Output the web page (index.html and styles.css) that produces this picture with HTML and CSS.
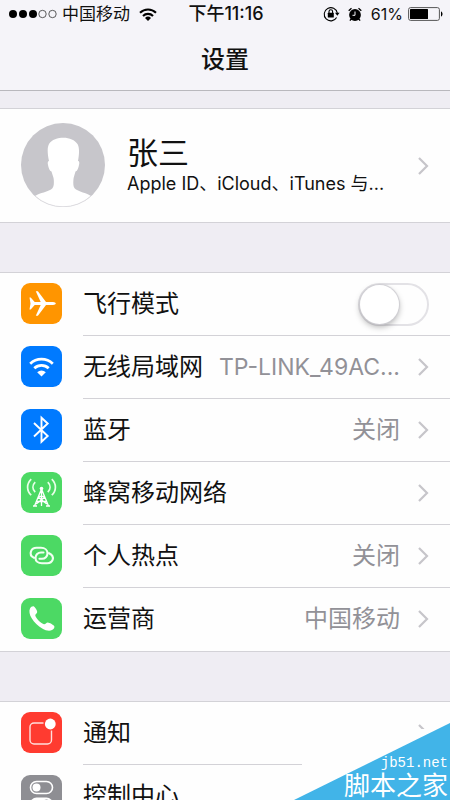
FILE: index.html
```html
<!DOCTYPE html>
<html lang="zh-CN">
<head>
<meta charset="utf-8">
<meta name="viewport" content="width=device-width, initial-scale=1">
<title>设置</title>
<link rel="stylesheet" href="styles.css">
</head>
<body>
<svg class="defs" aria-hidden="true">
  <symbol id="chevron" viewBox="0 0 12 20"><path d="M2 2l8 8-8 8" fill="none" stroke="#c6c5ca" stroke-width="2.2"/></symbol>
</svg>
<div class="screen">
  <header class="header">
    <div class="status">
      <div class="status-left">
        <svg width="48" height="10" viewBox="0 0 48 10" aria-hidden="true">
          <g fill="#000"><circle cx="4" cy="5" r="4"/><circle cx="14" cy="5" r="4"/><circle cx="24" cy="5" r="4"/></g>
          <g fill="none" stroke="#333" stroke-width=".8"><circle cx="33.500" cy="5" r="3.700"/><circle cx="43.500" cy="5" r="3.700"/></g>
        </svg>
        <span>中国移动</span>
        <svg class="status-wifi" width="18" height="13" viewBox="0 0 18 13" aria-hidden="true">
          <g fill="none" stroke="#000" stroke-width="2.100"><path d="M1 4.700a11.500 11.500 0 0 1 16 0"/><path d="M4 8a7 7 0 0 1 10 0"/></g>
          <path d="M6 10a4.300 4.300 0 0 1 6 0l-3 3z"/>
        </svg>
      </div>
      <time class="clock">下午11:16</time>
      <div class="status-right">
        <svg width="17" height="16" viewBox="0 0 17 16" aria-hidden="true">
          <path d="M13.600 11.500A6.600 6.600 0 1 1 14.300 7" fill="none" stroke="#000" stroke-width="1.100"/>
          <path d="M12 6.800h4.600l-2.300 3z"/>
          <rect x="4.800" y="6.800" width="6" height="4.600" rx=".5"/>
          <path d="M6 7V5.500a1.800 1.800 0 0 1 3.600 0V7" fill="none" stroke="#000" stroke-width="1.100"/>
        </svg>
        <svg class="status-alarm" width="14" height="15" viewBox="0 0 14 15" aria-hidden="true">
          <circle cx="7" cy="8" r="5.900"/>
          <path d="M.7 3.800L3.500 1.300M13.300 3.800L10.500 1.300M3.200 12L1.900 13.700M10.800 12l1.300 1.700" stroke="#000" stroke-width="1.300"/>
          <path d="M7 4.500V8.300H4.500" fill="none" stroke="#f5f4f9" stroke-width="1"/>
        </svg>
        <span class="battery-text">61%</span>
        <svg width="35" height="14" viewBox="0 0 35 14" aria-hidden="true">
          <rect x=".6" y=".6" width="30.800" height="12.800" rx="2" fill="none" stroke="#555" stroke-width="1"/>
          <rect x="2" y="2" width="18" height="10" rx=".6"/>
          <path d="M33 4.500c2 .6 2 4.400 0 5z"/>
        </svg>
      </div>
    </div>
    <h1 class="title">设置</h1>
  </header>

  <main class="content">
    <section class="group">
      <a class="profile" href="#account">
        <svg class="avatar" viewBox="0 0 84 84" aria-hidden="true">
          <circle cx="42" cy="42" r="42" fill="#c7c6cb"/>
          <path d="M14 73C20 69.500 26 69 30 66.500C33 64.500 33 61 32.800 57C32.700 54 31.500 52.500 30.500 48.500C28.500 48 27.500 45 26.800 41C26.600 39 27 38 28 38C26.500 31 26 25 28 21C30.500 16.500 37 14.700 42.500 14.700C48.500 14.700 54 17 56.500 21C58.700 25 58.200 31 57 38C58 38 58.500 39 58.200 41C57.500 45 56.500 48 54.500 48.500C53.500 52.500 52.500 54 52.400 57C52.200 61 52 64.500 55 66.500C59 69 64 69.500 70 73A42 42 0 0 1 14 73z" fill="#fff"/>
          <path d="M14 73a41.600 41.600 0 0 0 56 0" fill="none" stroke="#dddce0"/>
        </svg>
        <span class="profile-text">
          <span class="profile-name">张三</span>
          <span class="profile-sub">Apple ID、iCloud、iTunes 与...</span>
        </span>
        <svg class="chevron" aria-hidden="true"><use href="#chevron"/></svg>
      </a>
    </section>

    <section class="group">
      <div class="row">
        <svg class="icon" viewBox="0 0 41 41" aria-hidden="true">
          <rect width="41" height="41" rx="9" fill="#ff9500"/>
          <path fill="#fff" d="M8.500 14.500h1.200l4 4.500h6L14.800 8.300h2.100L25 19h7c1.600 0 2.800.8 2.800 1.500s-1.200 1.500-2.800 1.500h-7l-8.100 10.700h-2.100L19.700 22h-6l-4 4.500H8.500l1-6z"/>
        </svg>
        <div class="row-body">
          <label class="row-label" for="airplane">飞行模式</label>
          <input class="switch" id="airplane" type="checkbox">
        </div>
      </div>
      <a class="row" href="#wifi">
        <svg class="icon" viewBox="0 0 41 41" aria-hidden="true">
          <rect width="41" height="41" rx="9" fill="#007aff"/>
          <g fill="none" stroke="#fff" stroke-width="2.700"><path d="M9.200 17.700a16.300 16.300 0 0 1 22.600 0"/><path d="M13.300 22.300a10.300 10.300 0 0 1 14.400 0"/></g>
          <path d="M16.200 26.200a6.200 6.200 0 0 1 8.600 0l-4.300 4.200z" fill="#fff"/>
        </svg>
        <span class="row-body"><span class="row-label">无线局域网</span><span class="row-value row-value-latin">TP-LINK_49AC...</span><svg class="chevron" aria-hidden="true"><use href="#chevron"/></svg></span>
      </a>
      <a class="row" href="#bluetooth">
        <svg class="icon" viewBox="0 0 41 41" aria-hidden="true">
          <rect width="41" height="41" rx="9" fill="#007aff"/>
          <path d="M13 14l13.700 13-6.200 5.800V8.700l6.200 5.800L13 27.500" fill="none" stroke="#fff" stroke-width="1.900"/>
        </svg>
        <span class="row-body"><span class="row-label">蓝牙</span><span class="row-value">关闭</span><svg class="chevron" aria-hidden="true"><use href="#chevron"/></svg></span>
      </a>
      <a class="row" href="#cellular">
        <svg class="icon" viewBox="0 0 41 41" aria-hidden="true">
          <rect width="41" height="41" rx="9" fill="#4cd964"/>
          <g fill="none" stroke="#e9ffe9" stroke-width="1.700"><path d="M10.200 7.200c-4.800 4.500-4.800 11.500 0 16"/><path d="M14.200 10.200c-3 3-3 7 0 10"/><path d="M30.800 7.200c4.800 4.500 4.800 11.500 0 16"/><path d="M26.800 10.200c3 3 3 7 0 10"/></g>
          <g fill="none" stroke="#fff" stroke-width="1.300"><path d="M20.500 16v18M20.500 17l-7 17M20.500 17l7 17M17.500 24.500h6M15.500 29.500h10M17 25l8.800 7M24 25l-8.800 7M12 34h4M25 34h4"/></g>
          <circle cx="20.500" cy="16.500" r="1.800" fill="#fff"/>
        </svg>
        <span class="row-body"><span class="row-label">蜂窝移动网络</span><svg class="chevron" aria-hidden="true"><use href="#chevron"/></svg></span>
      </a>
      <a class="row" href="#hotspot">
        <svg class="icon" viewBox="0 0 41 41" aria-hidden="true">
          <rect width="41" height="41" rx="9" fill="#4cd964"/>
          <g fill="none" stroke="#f2fff2" stroke-width="2.100" stroke-linecap="round">
            <path d="M13 22.800c-3-1.500-4-3.800-3-6.500 1-2.500 3-3.500 5.500-3.500h4.500c4 0 6.500 2.500 6.500 5.500s-2.500 5.500-5.500 5.500h-2.500"/>
            <path d="M28 18.200c3 1.500 4.500 3.800 3.700 6.500-.9 2.500-3 3.500-5.500 3.500H21c-4 0-6.500-2.300-6.500-5.300s2.500-5.400 5.500-5.400h2.500"/>
          </g>
        </svg>
        <span class="row-body"><span class="row-label">个人热点</span><span class="row-value">关闭</span><svg class="chevron" aria-hidden="true"><use href="#chevron"/></svg></span>
      </a>
      <a class="row" href="#carrier">
        <svg class="icon" viewBox="0 0 41 41" aria-hidden="true">
          <rect width="41" height="41" rx="9" fill="#4cd964"/>
          <path fill="#fff" d="M9 10.500c1-1.700 2.700-2.700 4-2 1.200.7 3.200 4 3.200 5.500 0 1.600-2 2-1.900 3.500.2 2.500 6.200 8.300 8.700 8.700 1.500.2 2.200-1.900 3.900-1.800 1.500.1 5.500 2.300 6.300 3.500.8 1.300-.4 3-2.200 4.200-2.500 1.500-6 .7-9.800-1.500-4-2.300-8.200-6.500-10.500-10.300C8.500 16.800 7.800 13 9 10.500z"/>
        </svg>
        <span class="row-body"><span class="row-label">运营商</span><span class="row-value">中国移动</span><svg class="chevron" aria-hidden="true"><use href="#chevron"/></svg></span>
      </a>
    </section>

    <section class="group">
      <a class="row" href="#notifications">
        <svg class="icon" viewBox="0 0 41 41" aria-hidden="true">
          <rect width="41" height="41" rx="9" fill="#ff3b30"/>
          <path d="M22.500 11h-9.500a4 4 0 0 0-4 4v13a4 4 0 0 0 4 4h13.500a4 4 0 0 0 4-4V18.500" fill="none" stroke="#ffe0dc" stroke-width="1.400"/>
          <circle cx="29.300" cy="12" r="5.400" fill="#fff"/>
        </svg>
        <span class="row-body"><span class="row-label">通知</span><svg class="chevron" aria-hidden="true"><use href="#chevron"/></svg></span>
      </a>
      <a class="row" href="#control-center">
        <svg class="icon" viewBox="0 0 41 41" aria-hidden="true">
          <rect width="41" height="41" rx="9" fill="#8e8e93"/>
          <rect x="9.500" y="6.500" width="22" height="12" rx="6" fill="none" stroke="#fff" stroke-width="1.600"/>
          <circle cx="15.500" cy="12.500" r="4" fill="#fff"/>
          <rect x="9" y="22.500" width="23" height="13" rx="6.500" fill="#fff"/>
          <circle cx="25.500" cy="29" r="4.500" fill="#8e8e93"/>
        </svg>
        <span class="row-body"><span class="row-label">控制中心</span><svg class="chevron" aria-hidden="true"><use href="#chevron"/></svg></span>
      </a>
    </section>
  </main>

  <aside class="watermark">
    <svg class="watermark-shape" viewBox="0 0 156 78" aria-hidden="true">
      <path d="M8 7h148v71H8z" fill="#fefefe"/>
      <path d="M0 78L156 1v77z" fill="#41b4e8"/>
    </svg>
    <span class="watermark-url">jb51.net</span>
    <span class="watermark-name">脚本之家</span>
  </aside>
</div>
</body>
</html>
```

FILE: styles.css
```css
* {
  box-sizing: border-box;
}

body {
  margin: 0;
  background: #efedf3;
  color: #111;
  font-family: Inter, "Noto Sans CJK SC", sans-serif;
}

a {
  color: inherit;
  text-decoration: none;
}

svg {
  flex: none;
  display: block;
}

.defs {
  position: absolute;
  width: 0;
  height: 0;
}

.screen {
  position: relative;
  height: 100vh;
  overflow: hidden;
}

.header {
  background: #f5f4f9;
  border-bottom: 1px solid #b9b8bd;
  padding-bottom: 12px;
}

.status {
  display: grid;
  grid-template-columns: 1fr auto 1fr;
  align-items: center;
  height: 28px;
  padding: 0 7px 0 9px;
  font-size: 17px;
  line-height: 28px;
}

.status-left,
.status-right {
  display: flex;
  align-items: center;
  gap: 5px;
}

.status-wifi {
  margin-left: 4px;
}

.status-alarm {
  margin: 0 4px 0 3px;
}

.status-right {
  justify-content: flex-end;
}

.battery-text {
  font-size: 16px;
}

.clock {
  font-size: 18px;
  font-weight: 500;
}

.title {
  margin: 0;
  padding-top: 14px;
  font-size: 24px;
  line-height: 36px;
  font-weight: 500;
  text-align: center;
}

.content {
  display: flex;
  flex-direction: column;
  gap: 49px;
  padding-top: 17px;
}

.group {
  background: #fefefe;
  border-top: 1px solid #d3d2d7;
  border-bottom: 1px solid #d3d2d7;
}

.profile {
  display: flex;
  align-items: center;
  gap: 22px;
  min-height: 113px;
  padding: 0 21px;
}

.avatar {
  width: 84px;
  height: 84px;
  margin-bottom: 2px;
}

.profile-text {
  flex: 1;
  min-width: 0;
  display: flex;
  flex-direction: column;
  white-space: nowrap;
}

.profile-name {
  font-size: 31px;
  line-height: 36px;
}

.profile-sub {
  font-size: 18px;
  line-height: 26px;
}

.row {
  display: flex;
  align-items: center;
  gap: 21px;
  padding-left: 21px;
}

.icon {
  width: 41px;
  height: 41px;
  margin-bottom: 2px;
}

.row-body {
  flex: 1;
  min-width: 0;
  display: flex;
  align-items: center;
  height: 63px;
  padding-right: 21px;
  border-bottom: 1px solid #d3d2d7;
  font-size: 24px;
  line-height: 36px;
  white-space: nowrap;
}

.row:last-child .row-body {
  border-bottom-color: transparent;
}

.row-label {
  flex: 1;
}

.row-value {
  color: #929197;
}

.row-value-latin {
  font-size: 23px;
}

.chevron {
  width: 12px;
  height: 20px;
  margin-left: 17px;
}

.switch {
  appearance: none;
  width: 71px;
  height: 43px;
  margin: 0;
  border: 2px solid #e3e2e6;
  border-radius: 22px;
  background: #fefefe;
}

.switch::before {
  content: "";
  display: block;
  width: 39px;
  height: 39px;
  border-radius: 50%;
  background: #fff;
  box-shadow: 0 0 1px 1px #cfced3, 0 3px 6px rgba(0, 0, 0, 0.3);
}

.switch:checked {
  background: #4cd964;
}

.switch:checked::before {
  margin-left: auto;
}

.watermark {
  position: absolute;
  right: 0;
  bottom: 0;
  width: 156px;
  height: 78px;
  display: flex;
  flex-direction: column;
  align-items: flex-end;
  justify-content: flex-end;
  padding-right: 2px;
  color: #fff;
  white-space: nowrap;
}

.watermark-shape {
  position: absolute;
  inset: 0;
}

.watermark-url,
.watermark-name {
  position: relative;
}

.watermark-url {
  font-family: "Liberation Mono", monospace;
  font-size: 14px;
  line-height: 16px;
}

.watermark-name {
  font-size: 26px;
  line-height: 29px;
}
```
